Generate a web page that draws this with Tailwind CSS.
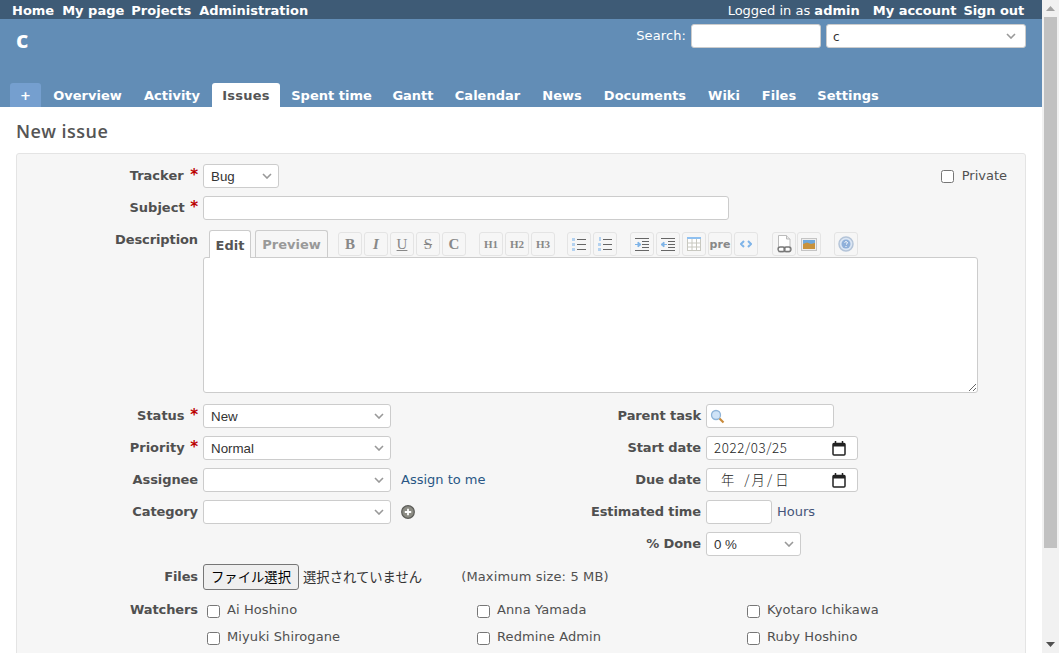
<!DOCTYPE html>
<html lang="en">
<head>
    <meta charset="UTF-8">
    <title>New issue</title>
    <script src="https://cdn.jsdelivr.net/npm/@tailwindcss/browser@4"></script>
</head>
<body class="bg-white font-['DejaVu_Sans',sans-serif] text-[13px] text-[#484848]">
<div class="flex h-[653px] w-[1059px] overflow-hidden">
    <div class="w-[1042px] shrink-0">
        <!-- Top menu -->
        <div class="flex h-[19px] items-center justify-between bg-[#3e5b76] pl-3 pr-[18px] pt-[2px] text-white">
            <div class="flex gap-2 font-bold">
                <span>Home</span><span>My page</span><span class="-ml-px">Projects</span><span>Administration</span>
            </div>
            <div class="flex">
                <span>Logged in as <b>admin</b></span>
                <b class="ml-[13px]">My account</b><b class="ml-[7px] tracking-[-0.1px]">Sign out</b>
            </div>
        </div>

        <!-- Header -->
        <div class="relative h-[88px] bg-[#628db6] text-white">
            <div class="flex items-start justify-between pl-4 pr-4">
                <div class="pt-[5px] font-['Open_Sans',sans-serif] text-[24px] leading-[30px] font-bold">c</div>
                <div class="flex items-center pt-[5px]">
                    <span class="mr-[5px] tracking-[0.1px]">Search:</span>
                    <div class="h-6 w-[130px] rounded-[3px] border border-[#ccc] bg-white"></div>
                    <div class="ml-[5px] flex h-6 w-[200px] items-center justify-between rounded-[3px] border border-[#ccc] bg-white pl-[6px] pr-[9px] text-[#333]">
                        <span class="pt-[2px] text-[12px]">c</span>
                        <svg width="10" height="6" viewBox="0 0 10 6" fill="none" stroke="#999" stroke-width="1.6"><path d="M1 1l4 4 4-4"/></svg>
                    </div>
                </div>
            </div>
            <div class="absolute bottom-0 left-[10px] flex h-6 items-stretch gap-[2px] font-bold">
                <div class="flex w-[31px] items-center justify-center rounded-t-[3px] bg-[#759fcf] pt-[2px]">+</div>
                <div class="flex w-[89px] items-center justify-center pt-[2px]">Overview</div>
                <div class="flex w-[76px] items-center justify-center pt-[2px]">Activity</div>
                <div class="flex w-[68px] items-center justify-center rounded-t-[3px] bg-white pt-[2px] tracking-[0.2px] text-[#555]">Issues</div>
                <div class="flex w-[99px] items-center justify-center pt-[2px]">Spent time</div>
                <div class="flex w-[60px] items-center justify-center pt-[2px]">Gantt</div>
                <div class="flex w-[85px] items-center justify-center pt-[2px]">Calendar</div>
                <div class="flex w-[60px] items-center justify-center pt-[2px]">News</div>
                <div class="flex w-[102px] items-center justify-center pt-[2px]">Documents</div>
                <div class="flex w-[52px] items-center justify-center pt-[2px]">Wiki</div>
                <div class="flex w-[54px] items-center justify-center pt-[2px]">Files</div>
                <div class="flex w-[80px] items-center justify-center pt-[2px]">Settings</div>
            </div>
        </div>

        <!-- Content -->
        <div class="px-4">
            <h2 class="h-[46px] pt-[12px] font-['Open_Sans',sans-serif] text-[18px] leading-[24px] font-semibold tracking-[0.45px] text-[#555]">New issue</h2>
            <div class="h-[600px] rounded-[3px] border border-[#e4e4e4] bg-[#f6f6f6] pt-[10px] text-[#505050]">

                <!-- Tracker -->
                <div class="mb-2 flex h-6 items-center">
                    <div class="w-[181px] text-right font-bold">Tracker <span class="ml-[2px] text-[15px] leading-none text-[#bb0000]">*</span></div>
                    <div class="ml-[5px] flex h-6 w-[76px] items-center justify-between rounded-[3px] border border-[#ccc] bg-white pl-[7px] pr-[6px] font-['Liberation_Sans',sans-serif] text-[13.33px] text-[#333]">
                        <span class="pt-px">Bug</span>
                        <svg width="10" height="6" viewBox="0 0 10 6" fill="none" stroke="#999" stroke-width="1.6"><path d="M1 1l4 4 4-4"/></svg>
                    </div>
                    <div class="ml-auto flex items-center pr-[18px]">
                        <input type="checkbox" class="m-0 size-[13px]">
                        <span class="ml-2">Private</span>
                    </div>
                </div>

                <!-- Subject -->
                <div class="mb-[9px] flex h-6 items-center">
                    <div class="w-[181px] text-right font-bold">Subject <span class="ml-px text-[15px] leading-none text-[#bb0000]">*</span></div>
                    <div class="ml-[5px] h-6 w-[526px] rounded-[3px] border border-[#ccc] bg-white"></div>
                </div>

                <!-- Description -->
                <div class="mb-[11px] flex">
                    <div class="w-[181px] pt-[1px] text-right font-bold tracking-[-0.1px]">Description</div>
                    <div class="ml-[5px] w-[775px]">
                        <div class="flex h-[28px] items-end pl-[6px]">
                            <div class="relative z-10 -mb-px flex h-[28px] w-[42px] items-center justify-center rounded-t-[3px] border border-b-0 border-[#ccc] bg-white pt-[2px] font-bold text-[#555]">Edit</div>
                            <div class="ml-1 flex h-[27px] w-[73px] items-center justify-center rounded-t-[3px] border border-b-0 border-[#ccc] pt-[2px] font-bold text-[#999]">Preview</div>
                            <div class="mb-px ml-[10px] flex items-center gap-[2px] text-[#888]">
                                <div class="flex size-6 items-center justify-center rounded-[3px] border border-[#e4e4e4] font-['Liberation_Serif',serif] text-[15px] font-bold">B</div>
                                <div class="flex size-6 items-center justify-center rounded-[3px] border border-[#e4e4e4] font-['Liberation_Serif',serif] text-[15px] font-bold italic">I</div>
                                <div class="flex size-6 items-center justify-center rounded-[3px] border border-[#e4e4e4] font-['Liberation_Serif',serif] text-[15px] underline">U</div>
                                <div class="flex size-6 items-center justify-center rounded-[3px] border border-[#e4e4e4] font-['Liberation_Serif',serif] text-[15px] line-through">S</div>
                                <div class="flex size-6 items-center justify-center rounded-[3px] border border-[#e4e4e4] font-['Liberation_Serif',serif] text-[15px] font-bold">C</div>
                                <div class="ml-[11px] flex size-6 items-center justify-center rounded-[3px] border border-[#e4e4e4] font-['Liberation_Serif',serif] text-[11px] font-bold">H1</div>
                                <div class="flex size-6 items-center justify-center rounded-[3px] border border-[#e4e4e4] font-['Liberation_Serif',serif] text-[11px] font-bold">H2</div>
                                <div class="flex size-6 items-center justify-center rounded-[3px] border border-[#e4e4e4] font-['Liberation_Serif',serif] text-[11px] font-bold">H3</div>
                                <div class="ml-[10px] flex size-6 items-center justify-center rounded-[3px] border border-[#e4e4e4]">
                                    <svg width="14" height="14" viewBox="0 0 14 14"><path d="M5 2.500h9M5 7.500h9M5 12.500h9" stroke="#666" stroke-width="1"/><path d="M0 1h3v3H0zM0 6h3v3H0zM0 11h3v3H0z" fill="#b4d2f0"/></svg>
                                </div>
                                <div class="flex size-6 items-center justify-center rounded-[3px] border border-[#e4e4e4]">
                                    <svg width="14" height="14" viewBox="0 0 14 14"><path d="M5 2.500h9M5 7.500h9M5 12.500h9" stroke="#666" stroke-width="1"/><path d="M1 0h2v4H1zM0 6h3v3H0zM0 11h3v3H0z" fill="#b4d2f0"/></svg>
                                </div>
                                <div class="ml-[11px] flex size-6 items-center justify-center rounded-[3px] border border-[#e4e4e4]">
                                    <svg width="14" height="13" viewBox="0 0 14 13"><path d="M0 .5h14M7 3.500h7M7 6.500h7M7 9.500h7M0 12.500h14" stroke="#666" stroke-width="1"/><path d="M0 6.500h4M3 4l3 2.500-3 2.500z" fill="#7fb4e8" stroke="#7fb4e8"/></svg>
                                </div>
                                <div class="flex size-6 items-center justify-center rounded-[3px] border border-[#e4e4e4]">
                                    <svg width="14" height="13" viewBox="0 0 14 13"><path d="M0 .5h14M7 3.500h7M7 6.500h7M7 9.500h7M0 12.500h14" stroke="#666" stroke-width="1"/><path d="M2 6.500h4M3 4L0 6.500 3 9z" fill="#7fb4e8" stroke="#7fb4e8"/></svg>
                                </div>
                                <div class="flex size-6 items-center justify-center rounded-[3px] border border-[#e4e4e4]">
                                    <svg width="14" height="14" viewBox="0 0 14 14"><rect x=".5" y=".5" width="13" height="13" fill="#fff" stroke="#c8c8c0"/><rect width="14" height="2" fill="#8fc0f0"/><path d="M5 2v12M9.500 2v12M0 6h14M0 10h14" stroke="#c8c8c0"/></svg>
                                </div>
                                <div class="flex size-6 items-center justify-center rounded-[3px] border border-[#e4e4e4] text-[11px] font-bold leading-none">pre</div>
                                <div class="flex size-6 items-center justify-center rounded-[3px] border border-[#e4e4e4]">
                                    <svg width="12" height="8" viewBox="0 0 12 8" fill="none" stroke="#7fb4e8" stroke-width="2"><path d="M4 1L1 4l3 3M8 1l3 3-3 3"/></svg>
                                </div>
                                <div class="ml-3 flex size-6 items-center justify-center rounded-[3px] border border-[#e4e4e4]">
                                    <svg width="16" height="18" viewBox="0 0 16 18"><path d="M2.500.5h8l3.500 3.500v13h-11.500z" fill="#fff" stroke="#bbb"/><path d="M10.500.5v3.500h3.500" fill="#e8e8e8" stroke="#bbb"/><rect x="2" y="12" width="7" height="4.500" rx="2.200" fill="none" stroke="#777" stroke-width="1.300"/><rect x="8" y="12" width="7" height="4.500" rx="2.200" fill="none" stroke="#777" stroke-width="1.300"/></svg>
                                </div>
                                <div class="-ml-px flex size-6 items-center justify-center rounded-[3px] border border-[#e4e4e4]">
                                    <svg width="16" height="13" viewBox="0 0 16 13"><rect x=".5" y=".5" width="15" height="12" fill="#eee" stroke="#c4c4c4"/><rect x="2" y="2" width="12" height="4" fill="#6fa8dc"/><path d="M2 6l4-1.500 4 1.500 4-1v6H2z" fill="#c8923c"/></svg>
                                </div>
                                <div class="ml-[11px] flex size-6 items-center justify-center rounded-[3px] border border-[#e4e4e4]">
                                    <svg width="16" height="16" viewBox="0 0 16 16"><circle cx="8" cy="8" r="7" fill="#dbe6f4" stroke="#b4c4d8" stroke-width="1.500"/><circle cx="8" cy="8" r="4.500" fill="#8fb0da"/><path d="M6.500 6.500Q8 4.500 9.500 6.500 9.500 7.500 8 8.500M8 10v1" stroke="#fff" fill="none"/></svg>
                                </div>
                            </div>
                        </div>
                        <textarea class="block h-[136px] w-[775px] rounded-[3px] border border-[#ccc] bg-white"></textarea>
                    </div>
                </div>

                <!-- Attributes -->
                <div class="flex">
                    <div class="w-[503px]">
                        <div class="mb-2 flex h-6 items-center">
                            <div class="w-[181px] text-right font-bold">Status <span class="ml-px text-[15px] leading-none text-[#bb0000]">*</span></div>
                            <div class="ml-[5px] flex h-6 w-[188px] items-center justify-between rounded-[3px] border border-[#ccc] bg-white pl-[7px] pr-[6px] font-['Liberation_Sans',sans-serif] text-[13.33px] text-[#333]">
                                <span class="pt-px">New</span>
                                <svg width="10" height="6" viewBox="0 0 10 6" fill="none" stroke="#999" stroke-width="1.6"><path d="M1 1l4 4 4-4"/></svg>
                            </div>
                        </div>
                        <div class="mb-2 flex h-6 items-center">
                            <div class="w-[181px] text-right font-bold">Priority <span class="ml-px text-[15px] leading-none text-[#bb0000]">*</span></div>
                            <div class="ml-[5px] flex h-6 w-[188px] items-center justify-between rounded-[3px] border border-[#ccc] bg-white pl-[7px] pr-[6px] font-['Liberation_Sans',sans-serif] text-[13.33px] text-[#333]">
                                <span class="pt-px">Normal</span>
                                <svg width="10" height="6" viewBox="0 0 10 6" fill="none" stroke="#999" stroke-width="1.6"><path d="M1 1l4 4 4-4"/></svg>
                            </div>
                        </div>
                        <div class="mb-2 flex h-6 items-center">
                            <div class="w-[181px] text-right font-bold tracking-[-0.1px]">Assignee</div>
                            <div class="ml-[5px] flex h-6 w-[188px] items-center justify-end rounded-[3px] border border-[#ccc] bg-white pr-[6px]">
                                <svg width="10" height="6" viewBox="0 0 10 6" fill="none" stroke="#999" stroke-width="1.6"><path d="M1 1l4 4 4-4"/></svg>
                            </div>
                            <span class="ml-[10px] text-[#2a5685]">Assign to me</span>
                        </div>
                        <div class="mb-2 flex h-6 items-center">
                            <div class="w-[181px] text-right font-bold tracking-[-0.1px]">Category</div>
                            <div class="ml-[5px] flex h-6 w-[188px] items-center justify-end rounded-[3px] border border-[#ccc] bg-white pr-[6px]">
                                <svg width="10" height="6" viewBox="0 0 10 6" fill="none" stroke="#999" stroke-width="1.6"><path d="M1 1l4 4 4-4"/></svg>
                            </div>
                            <svg class="ml-[10px]" width="14" height="14" viewBox="0 0 14 14"><circle cx="7" cy="7" r="6.300" fill="#8c8c84" stroke="#5c5c58" stroke-width="1.200"/><path d="M7 3.800v6.400M3.800 7h6.400" stroke="#fff" stroke-width="1.800"/></svg>
                        </div>
                    </div>
                    <div>
                        <div class="mb-2 flex h-6 items-center">
                            <div class="w-[181px] text-right font-bold tracking-[-0.1px]">Parent task</div>
                            <div class="ml-[5px] flex h-6 w-[128px] items-center rounded-[3px] border border-[#ccc] bg-white pl-[3px]">
                                <svg width="15" height="15" viewBox="0 0 15 15"><circle cx="6" cy="6" r="4.500" fill="#cfe3f7" stroke="#8fb4d8" stroke-width="1.300"/><path d="M9.500 9.500l4 4" stroke="#c98a3a" stroke-width="2.200"/></svg>
                            </div>
                        </div>
                        <div class="mb-2 flex h-6 items-center">
                            <div class="w-[181px] text-right font-bold tracking-[-0.1px]">Start date</div>
                            <div class="ml-[5px] flex h-6 w-[152px] items-center justify-between rounded-[3px] border border-[#ccc] bg-white pl-[7px] pr-[11px] font-['Noto_Sans_CJK_JP',sans-serif] text-[13.33px] font-light tracking-[0.6px] text-[#222]">
                                2022/03/25
                                <svg width="14" height="15" viewBox="0 0 14 15"><rect x="1" y="2.500" width="12" height="11.500" rx="1" fill="#fff" stroke="#222" stroke-width="1.500"/><rect x="1" y="2" width="12" height="3.500" fill="#222"/><path d="M3.500 0v3M10.500 0v3" stroke="#222" stroke-width="1.500"/></svg>
                            </div>
                        </div>
                        <div class="mb-2 flex h-6 items-center">
                            <div class="w-[181px] text-right font-bold tracking-[-0.1px]">Due date</div>
                            <div class="ml-[5px] flex h-6 w-[152px] items-center justify-between rounded-[3px] border border-[#ccc] bg-white pl-[14px] pr-[11px] font-['Noto_Sans_CJK_JP',sans-serif] text-[13.33px] font-light text-[#222]">
                                <span class="flex"><span>年</span><span class="ml-[10px]">/</span><span class="ml-[2px]">月</span><span class="ml-[2px]">/</span><span class="ml-[3px]">日</span></span>
                                <svg width="14" height="15" viewBox="0 0 14 15"><rect x="1" y="2.500" width="12" height="11.500" rx="1" fill="#fff" stroke="#222" stroke-width="1.500"/><rect x="1" y="2" width="12" height="3.500" fill="#222"/><path d="M3.500 0v3M10.500 0v3" stroke="#222" stroke-width="1.500"/></svg>
                            </div>
                        </div>
                        <div class="mb-2 flex h-6 items-center">
                            <div class="w-[181px] text-right font-bold tracking-[-0.1px]">Estimated time</div>
                            <div class="ml-[5px] h-6 w-[66px] rounded-[3px] border border-[#ccc] bg-white"></div>
                            <span class="ml-[5px] text-[#45557a]">Hours</span>
                        </div>
                        <div class="mb-2 flex h-6 items-center">
                            <div class="w-[181px] text-right font-bold tracking-[-0.1px]">% Done</div>
                            <div class="ml-[5px] flex h-6 w-[95px] items-center justify-between rounded-[3px] border border-[#ccc] bg-white pl-[7px] pr-[6px] font-['Liberation_Sans',sans-serif] text-[13.33px] text-[#333]">
                                <span class="pt-px">0 %</span>
                                <svg width="10" height="6" viewBox="0 0 10 6" fill="none" stroke="#999" stroke-width="1.6"><path d="M1 1l4 4 4-4"/></svg>
                            </div>
                        </div>
                    </div>
                </div>

                <!-- Files -->
                <div class="mb-[9px] flex h-[26px] items-center">
                    <div class="w-[181px] pb-px text-right font-bold tracking-[-0.1px]">Files</div>
                    <button class="ml-[5px] h-[26px] w-[96px] rounded-[3px] border border-[#767676] bg-[#efefef] font-['Noto_Sans_CJK_JP',sans-serif] text-[13.33px] text-black">ファイル選択</button>
                    <span class="ml-1 font-['Noto_Sans_CJK_JP',sans-serif] text-[13.33px] text-[#333]">選択されていません</span>
                    <span class="ml-[39px] tracking-[0.15px]">(Maximum size: 5 MB)</span>
                </div>

                <!-- Watchers -->
                <div class="flex">
                    <div class="w-[181px] pt-[1px] text-right font-bold tracking-[-0.1px]">Watchers</div>
                    <div class="ml-[9px] grid w-[810px] grid-cols-3 gap-y-[9px] pt-[2px] tracking-[0.1px]">
                        <div class="flex h-[18px] items-center"><input type="checkbox" class="m-0 mt-[2px] size-[13px]"><span class="ml-[7px]">Ai Hoshino</span></div>
                        <div class="flex h-[18px] items-center"><input type="checkbox" class="m-0 mt-[2px] size-[13px]"><span class="ml-[7px]">Anna Yamada</span></div>
                        <div class="flex h-[18px] items-center"><input type="checkbox" class="m-0 mt-[2px] size-[13px]"><span class="ml-[7px]">Kyotaro Ichikawa</span></div>
                        <div class="flex h-[18px] items-center"><input type="checkbox" class="m-0 mt-[2px] size-[13px]"><span class="ml-[7px]">Miyuki Shirogane</span></div>
                        <div class="flex h-[18px] items-center"><input type="checkbox" class="m-0 mt-[2px] size-[13px]"><span class="ml-[7px]">Redmine Admin</span></div>
                        <div class="flex h-[18px] items-center"><input type="checkbox" class="m-0 mt-[2px] size-[13px]"><span class="ml-[7px]">Ruby Hoshino</span></div>
                    </div>
                </div>
            </div>
        </div>
    </div>

    <!-- Scrollbar -->
    <div class="flex h-[653px] w-[17px] shrink-0 flex-col items-center bg-[#f1f1f1]">
        <svg class="my-[6px]" width="9" height="5" viewBox="0 0 9 5"><path d="M4.500 0L9 5H0z" fill="#a3a3a3"/></svg>
        <div class="h-[531px] w-[13px] bg-[#c1c1c1]"></div>
        <svg class="mb-[6px] mt-auto" width="9" height="5" viewBox="0 0 9 5"><path d="M4.500 5L9 0H0z" fill="#505050"/></svg>
    </div>
</div>
</body>
</html>
